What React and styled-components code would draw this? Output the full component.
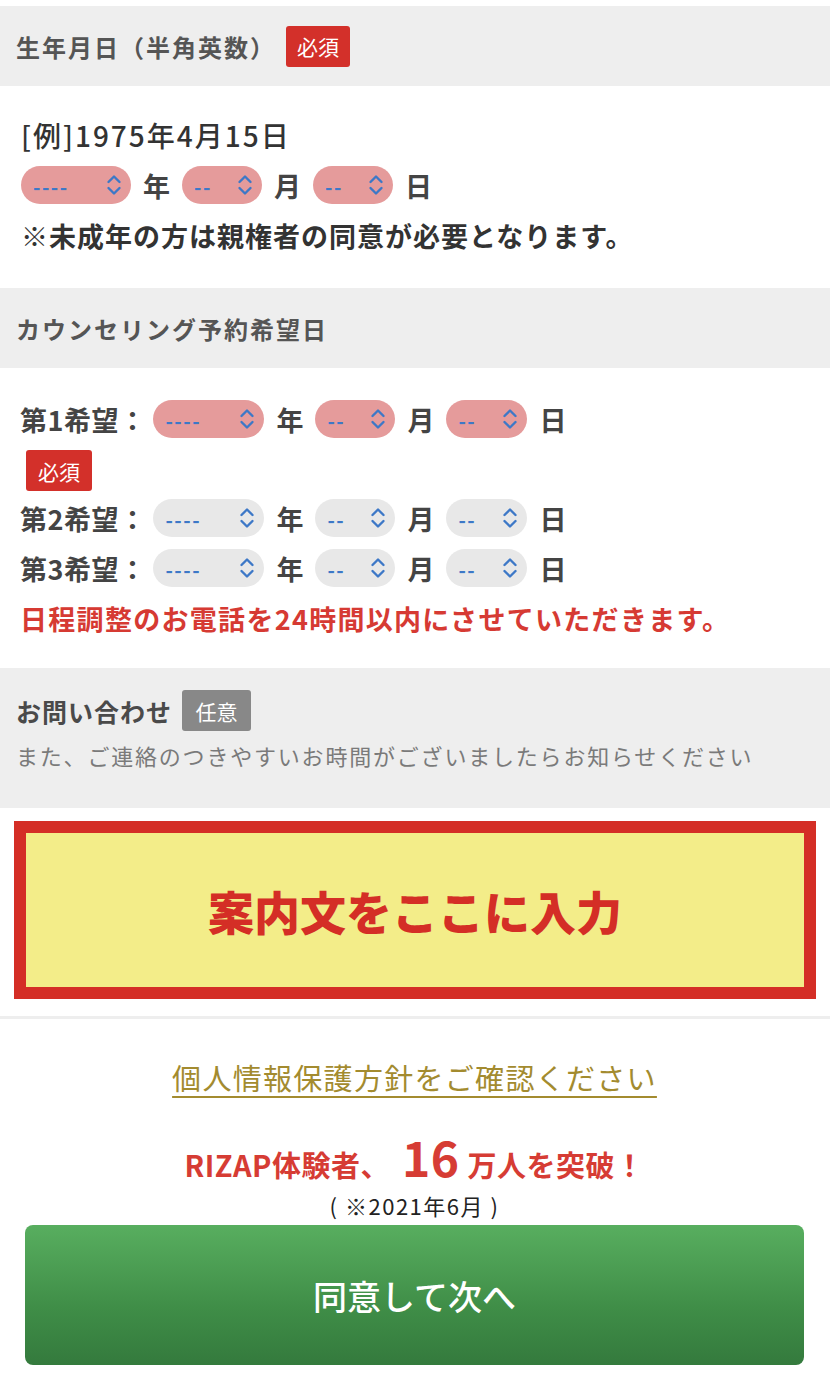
import React from 'react'
import styled, { createGlobalStyle } from 'styled-components'

const GlobalStyle = createGlobalStyle`
  body {
    margin: 0;
    background: #fff;
    font-family: "Noto Sans CJK JP", "Noto Sans", sans-serif;
  }
`

const Page = styled.div`
  width: 830px;
  padding-top: 6px;
  display: flex;
  flex-direction: column;
`

const SectionHead = styled.div`
  background: #eeeeee;
  height: 80px;
  padding-left: 16px;
  display: flex;
  align-items: center;
  gap: 10px;
  font-size: 24px;
  font-weight: 700;
  color: #555;
  letter-spacing: 2px;
`

const Badge = styled.span`
  display: inline-flex;
  align-items: center;
  justify-content: center;
  width: ${p => p.w || 64}px;
  height: 41px;
  border-radius: 3px;
  background: ${p => (p.optional ? '#888888' : '#d3302a')};
  color: #fff;
  font-size: 21px;
  font-weight: 400;
  letter-spacing: 0;
`

const SectionBody = styled.div`
  padding: ${p => p.pad};
  display: flex;
  flex-direction: column;
  color: #3a3a3a;
`

const Line = styled.div`
  height: 50px;
  display: flex;
  align-items: center;
  font-size: ${p => p.size || 27}px;
  font-weight: ${p => p.weight || 700};
  letter-spacing: ${p => p.spacing || 1}px;
  color: ${p => p.color || '#333'};
  white-space: nowrap;
`

const DateRow = styled.div`
  height: 50px;
  display: flex;
  align-items: center;
  gap: 12px;
  font-size: 27px;
  font-weight: 700;
  color: #444;
`

const RowLabel = styled.span`
  margin-right: -5px;
  letter-spacing: 0.5px;
`

const Pill = styled.div`
  width: ${p => p.w}px;
  height: 38px;
  border-radius: 19px;
  background: ${p => (p.required ? '#e59b9b' : '#e8e8e8')};
  display: flex;
  align-items: center;
  justify-content: space-between;
  padding: 0 9px 0 12px;
  box-sizing: border-box;
  color: #3d78c7;
  font-size: 20px;
  font-weight: 700;
  letter-spacing: 1.5px;
`

const Dashes = styled.span`
  padding-top: 3px;
`

const RequiredBadgeWrap = styled.div`
  padding: 6px 0 2px 6px;
  display: flex;
`

const InquiryBox = styled.div`
  background: #eeeeee;
  padding: 22px 16px 37px;
  display: flex;
  flex-direction: column;
`

const InquiryTitle = styled.div`
  display: flex;
  align-items: center;
  gap: 10px;
  font-size: 25px;
  font-weight: 700;
  letter-spacing: 1px;
  color: #4a4a4a;
`

const InquiryNote = styled.div`
  height: 32px;
  margin-top: 8px;
  display: flex;
  align-items: center;
  font-size: 22px;
  letter-spacing: 1.8px;
  color: #7a7a7a;
  white-space: nowrap;
`

const Notice = styled.div`
  margin: 13px 14px 0;
  height: 178px;
  box-sizing: border-box;
  border: 12px solid #d42e26;
  background: #f3ed89;
  display: flex;
  align-items: center;
  justify-content: center;
  color: #d42e26;
  font-size: 46px;
  font-weight: 900;
`

const Divider = styled.div`
  margin-top: 17px;
  height: 3px;
  background: #eeeeee;
`

const Footer = styled.div`
  display: flex;
  flex-direction: column;
  align-items: center;
  padding: 38px 26px 0 25px;
`

const PolicyLink = styled.a`
  font-size: 29px;
  color: #a38b2f;
  text-decoration: underline;
  text-underline-offset: 6px;
  text-decoration-thickness: 2px;
  line-height: 40px;
  letter-spacing: 1.3px;
`

const Achievement = styled.div`
  margin-top: 35px;
  height: 48px;
  line-height: 48px;
  display: flex;
  align-items: baseline;
  color: #d63c34;
  font-size: 29px;
  font-weight: 700;
  letter-spacing: 0.5px;
  white-space: nowrap;
`

const BigNum = styled.span`
  font-size: 48px;
  line-height: 48px;
  margin: 0 8px 0 12px;
`

const DateNote = styled.div`
  margin-top: 13px;
  font-size: 22px;
  letter-spacing: 1.5px;
  color: #222;
  line-height: 24px;
`

const NextButton = styled.button`
  margin-top: 8px;
  width: 779px;
  height: 140px;
  border: none;
  border-radius: 8px;
  background: linear-gradient(#58ae5f, #3f8d47 60%, #347a3d);
  color: #fff;
  font-family: inherit;
  font-size: 34px;
  font-weight: 500;
  letter-spacing: 0;
`

function Chevrons() {
  return (
    <svg width="16" height="24" viewBox="0 0 16 24" fill="none">
      <path d="M2.5 9 L8 3.5 L13.5 9" stroke="#3d78c7" strokeWidth="2.4" strokeLinecap="round" strokeLinejoin="round" />
      <path d="M2.5 15 L8 20.5 L13.5 15" stroke="#3d78c7" strokeWidth="2.4" strokeLinecap="round" strokeLinejoin="round" />
    </svg>
  )
}

function Select({ w, required, placeholder }) {
  return (
    <Pill w={w} required={required}>
      <Dashes>{placeholder}</Dashes>
      <Chevrons />
    </Pill>
  )
}

function DateSelects({ required, widths }) {
  return (
    <>
      <Select w={widths[0]} required={required} placeholder="----" />
      <span>年</span>
      <Select w={widths[1]} required={required} placeholder="--" />
      <span>月</span>
      <Select w={widths[2]} required={required} placeholder="--" />
      <span>日</span>
    </>
  )
}

const wishes = [
  { label: '第1希望：', required: true },
  { label: '第2希望：', required: false },
  { label: '第3希望：', required: false },
]

export default function App() {
  return (
    <Page>
      <GlobalStyle />
      <SectionHead>
        生年月日（半角英数）
        <Badge>必須</Badge>
      </SectionHead>
      <SectionBody pad="24px 21px 28px">
        <Line weight={500} size={28} spacing={2}>[例]1975年4月15日</Line>
        <DateRow>
          <DateSelects required widths={[110, 80, 80]} />
        </DateRow>
        <Line>※未成年の方は親権者の同意が必要となります。</Line>
      </SectionBody>

      <SectionHead>カウンセリング予約希望日</SectionHead>
      <SectionBody pad="26px 20px 25px">
        {wishes.map((wish, i) => (
          <React.Fragment key={i}>
            <DateRow>
              <RowLabel>{wish.label}</RowLabel>
              <DateSelects required={wish.required} widths={[111, 80, 81]} />
            </DateRow>
            {wish.required && (
              <RequiredBadgeWrap>
                <Badge w={66}>必須</Badge>
              </RequiredBadgeWrap>
            )}
          </React.Fragment>
        ))}
        <Line color="#d63a33" spacing={1.3}>日程調整のお電話を24時間以内にさせていただきます。</Line>
      </SectionBody>

      <InquiryBox>
        <InquiryTitle>
          お問い合わせ
          <Badge optional w={69}>任意</Badge>
        </InquiryTitle>
        <InquiryNote>また、ご連絡のつきやすいお時間がございましたらお知らせください</InquiryNote>
      </InquiryBox>

      <Notice>案内文をここに入力</Notice>
      <Divider />

      <Footer>
        <PolicyLink href="#">個人情報保護方針をご確認ください</PolicyLink>
        <Achievement>
          RIZAP体験者、<BigNum>16</BigNum>万人を突破！
        </Achievement>
        <DateNote>( ※2021年6月 )</DateNote>
        <NextButton type="button">同意して次へ</NextButton>
      </Footer>
    </Page>
  )
}
